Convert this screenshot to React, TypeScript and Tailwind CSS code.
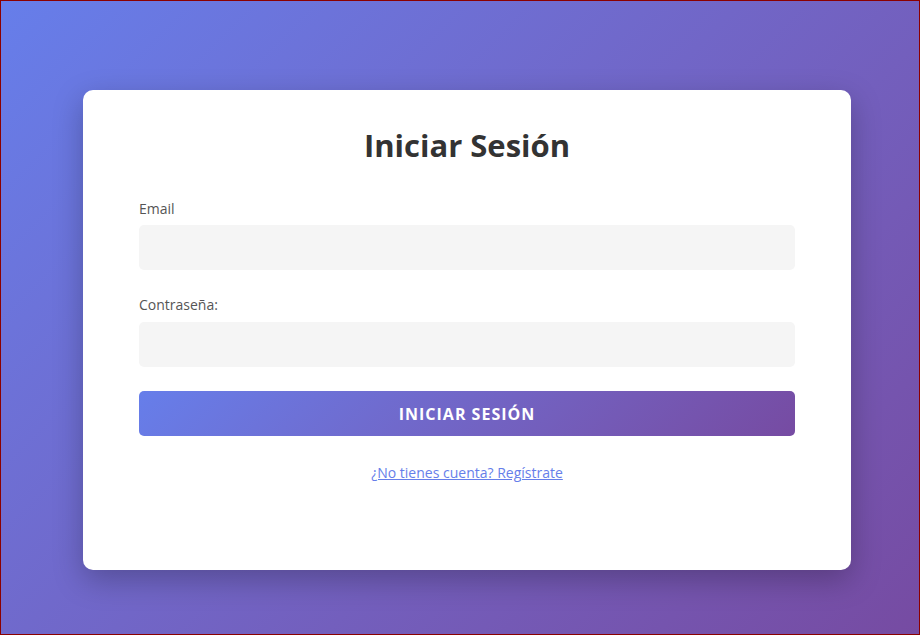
export default function App() {
  return (
    <div className="h-[635px] w-full overflow-hidden border border-[#8b0000] bg-linear-135 from-[#667eea] to-[#764ba2] font-['Open_Sans',sans-serif]">
      <div className="ml-[82px] mt-[89px] h-[480px] w-[768px] rounded-[10px] bg-white px-[56px] pt-[36px] shadow-[0_10px_30px_rgba(0,0,0,0.25)]">
        <h1 className="mb-[35px] text-center text-[31px] leading-[38px] font-bold text-[#333]">
          Iniciar Sesión
        </h1>

        <form onSubmit={(e) => e.preventDefault()}>
          <div className="mb-[25px]">
            <label className="mb-[6px] block text-sm leading-5 text-[#555]">Email</label>
            <input
              type="email"
              className="block h-[45px] w-full rounded-[5px] bg-[#f5f5f5] px-3 text-sm outline-none"
            />
          </div>

          <div className="mb-[24px]">
            <label className="mb-[7px] block text-sm leading-5 text-[#555]">Contraseña:</label>
            <input
              type="password"
              className="block h-[45px] w-full rounded-[5px] bg-[#f5f5f5] px-3 text-sm outline-none"
            />
          </div>

          <button
            type="submit"
            className="block h-[45px] w-full rounded-[5px] bg-linear-135 from-[#667eea] to-[#764ba2] text-base font-bold tracking-[1px] text-white uppercase"
          >
            Iniciar Sesión
          </button>
        </form>

        <p className="mt-[27px] text-center text-sm leading-5">
          <a href="#" className="text-[#667eea] underline">
            ¿No tienes cuenta? Regístrate
          </a>
        </p>
      </div>
    </div>
  )
}
